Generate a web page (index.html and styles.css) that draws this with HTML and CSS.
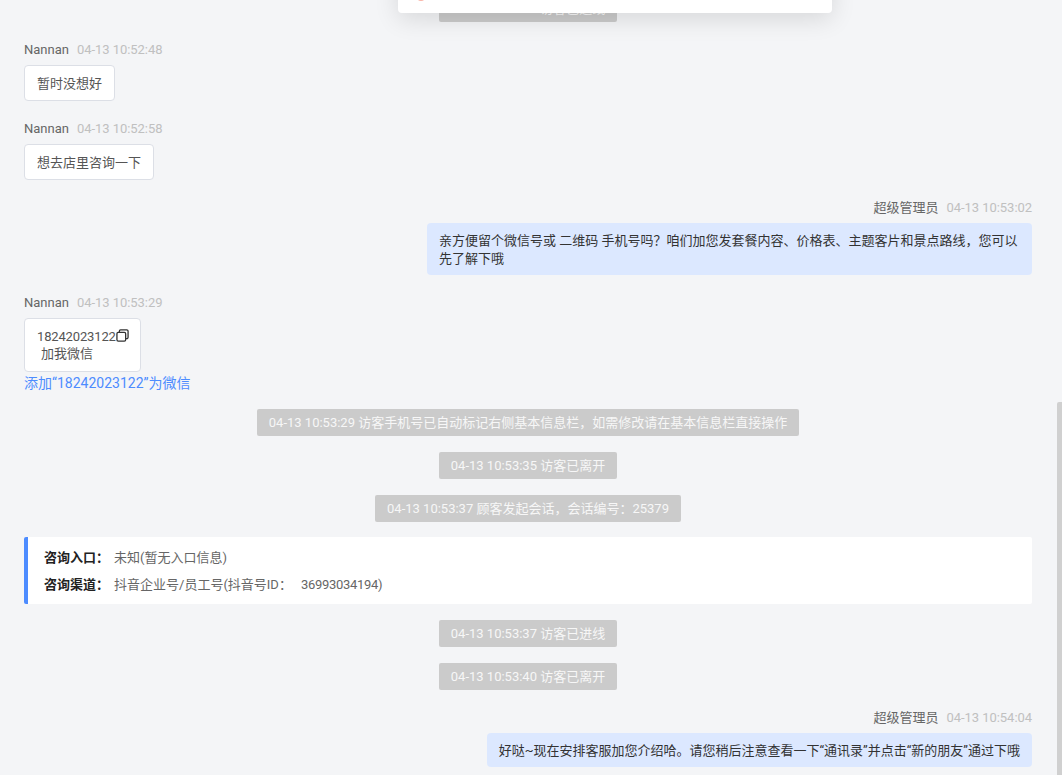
FILE: index.html
```html
<!DOCTYPE html>
<html lang="zh-CN">
<head>
<meta charset="utf-8">
<title>会话记录</title>
<link rel="stylesheet" href="styles.css">
</head>
<body>
<div class="chat">
  <div class="sys first"><span class="pill">04-13 10:52:40 访客已进线</span></div>

  <div class="msg">
    <div class="meta"><span class="name">Nannan</span><span class="time">04-13 10:52:48</span></div>
    <div class="bubble">暂时没想好</div>
  </div>
  <div class="msg">
    <div class="meta"><span class="name">Nannan</span><span class="time">04-13 10:52:58</span></div>
    <div class="bubble">想去店里咨询一下</div>
  </div>
  <div class="msg mine">
    <div class="meta"><span class="name">超级管理员</span><span class="time">04-13 10:53:02</span></div>
    <div class="bubble">亲方便留个微信号或 二维码 手机号吗？咱们加您发套餐内容、价格表、主题客片和景点路线，您可以先了解下哦</div>
  </div>
  <div class="msg with-link">
    <div class="meta"><span class="name">Nannan</span><span class="time">04-13 10:53:29</span></div>
    <div class="bubble card">
      <div class="phone">18242023122<svg class="copy" viewBox="0 0 14 14" width="13" height="13" fill="none" stroke="#333" stroke-width="1.4"><rect x="1" y="3.6" width="9.4" height="9.4" rx="1.4"/><path d="M3.6 3.4V2.4A1.4 1.4 0 0 1 5 1h6.6A1.4 1.4 0 0 1 13 2.4V9a1.4 1.4 0 0 1-1.4 1.4h-1"/></svg></div>
      <div class="add">加我微信</div>
    </div>
    <a class="link">添加“18242023122”为微信</a>
  </div>

  <div class="sys"><span class="pill">04-13 10:53:29 访客手机号已自动标记右侧基本信息栏，如需修改请在基本信息栏直接操作</span></div>
  <div class="sys"><span class="pill">04-13 10:53:35 访客已离开</span></div>
  <div class="sys before-info"><span class="pill">04-13 10:53:37 顾客发起会话，会话编号：25379</span></div>

  <div class="info">
    <div class="info-row"><b>咨询入口：</b>未知(暂无入口信息)</div>
    <div class="info-row"><b>咨询渠道：</b>抖音企业号/员工号(抖音号ID：<span class="uid">36993034194</span>)</div>
  </div>

  <div class="sys"><span class="pill">04-13 10:53:37 访客已进线</span></div>
  <div class="sys before-msg"><span class="pill">04-13 10:53:40 访客已离开</span></div>

  <div class="msg mine">
    <div class="meta"><span class="name">超级管理员</span><span class="time">04-13 10:54:04</span></div>
    <div class="bubble">好哒~现在安排客服加您介绍哈。请您稍后注意查看一下“通讯录”并点击“新的朋友”通过下哦</div>
  </div>
</div>

<div class="toast"><span class="toast-icon"></span></div>
<div class="scrollbar"></div>
</body>
</html>
```

FILE: styles.css
```css
* { box-sizing: border-box; }
html, body { margin: 0; height: 100%; overflow: hidden; }
body {
  background: #f4f5f7;
  font-family: Roboto, "Noto Sans CJK SC", sans-serif;
  font-size: 13px;
  line-height: 18px;
  color: #555;
  position: relative;
}
.chat {
  display: flex;
  flex-direction: column;
  padding: 0 30px 0 24px;
  margin-top: -5px;
}
.sys { display: flex; justify-content: center; margin-bottom: 16px; }
.sys.first { margin-bottom: 17px; }
.sys.before-info { margin-bottom: 15px; }
.sys.before-msg { margin-bottom: 17px; }
.pill {
  height: 27px;
  line-height: 28px;
  padding: 0 12px;
  background: #cbcbcb;
  color: #f7f7f7;
  border-radius: 2px;
  white-space: nowrap;
}
.msg { display: flex; flex-direction: column; align-items: flex-start; margin-bottom: 17px; }
.msg.mine { align-items: flex-end; }
.msg:last-child { margin-bottom: 0; }
.msg.with-link { margin-bottom: 15px; }
.meta { height: 20px; line-height: 22px; margin-bottom: 6px; white-space: nowrap; }
.name { color: #666; }
.time { color: #c0c0c0; margin-left: 8px; letter-spacing: -.05px; }
.bubble {
  background: #fff;
  border: 1px solid #dcdfe6;
  border-radius: 4px;
  padding: 9px 12px 7px;
  color: #555;
}
.mine .bubble {
  background: #dce8ff;
  border: 0;
  max-width: 605px;
  color: #333;
}
.card { width: 117px; }
.phone { display: flex; align-items: center; height: 18px; white-space: nowrap; letter-spacing: -.15px; }
.copy { flex: none; margin-top: -3px; }
.add { padding-left: 4px; line-height: 16px; height: 18px; }
.link { color: #4d8cff; font-size: 14px; height: 22px; line-height: 22px; white-space: nowrap; }
.info {
  background: #fff;
  border-left: 4px solid #4d8cff;
  border-radius: 2px;
  padding: 6px 16px 7px;
  margin-bottom: 16px;
  color: #666;
}
.info-row { height: 27px; line-height: 29px; white-space: nowrap; }
.info-row b { color: #222; font-weight: 700; margin-right: 5px; }
.uid { margin-left: 9px; letter-spacing: -.3px; }
.toast {
  position: absolute;
  left: 398px;
  top: -40px;
  width: 434px;
  height: 53px;
  padding: 33px 0 0 19px;
  background: #fff;
  border-radius: 4px;
  box-shadow: 0 6px 24px rgba(0, 0, 0, .12);
}
.toast-icon {
  display: block;
  width: 8px;
  height: 8px;
  border-radius: 50%;
  background: #f9b4a8;
}
.scrollbar {
  position: absolute;
  right: 0;
  top: 402px;
  bottom: 0;
  width: 5px;
  background: #d0d0d0;
  border-radius: 2px 0 0 0;
}
```
